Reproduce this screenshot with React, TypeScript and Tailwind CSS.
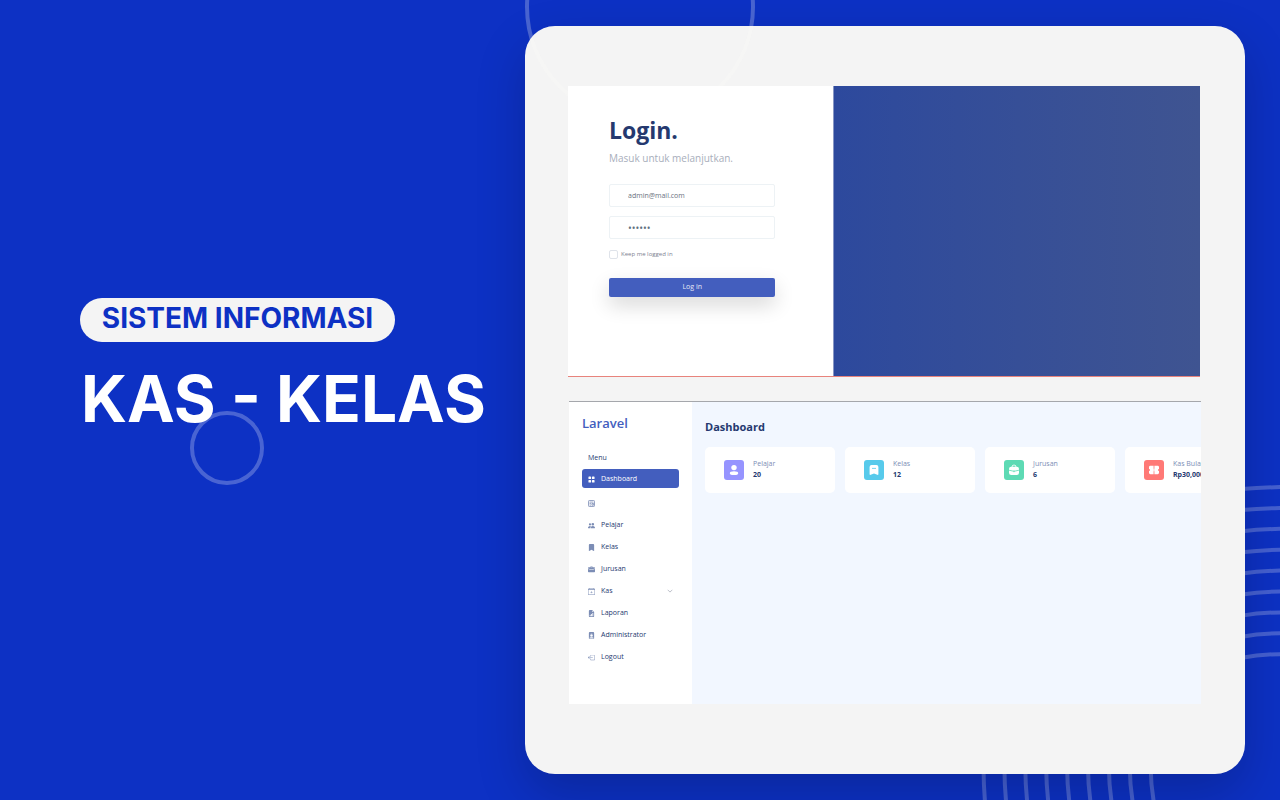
import type { ReactNode } from "react";
import {
  BsBookmarkFill,
  BsBriefcaseFill,
  BsCalendarPlus,
  BsChevronDown,
  BsFileEarmarkBarGraphFill,
  BsGridFill,
  BsPeopleFill,
  BsPersonBadgeFill,
  BsBoxArrowLeft,
} from "react-icons/bs";

const ringSteps = [0, 1, 2, 3, 4, 5, 6, 7, 8];

function Rings() {
  return (
    <svg
      aria-hidden="true"
      className="pointer-events-none absolute right-0 bottom-0 h-80 w-[300px]"
      viewBox="0 0 300 320"
      fill="none"
      stroke="#ffffff"
      strokeOpacity="0.23"
      strokeWidth="4"
    >
      {ringSteps.map((i) => (
        <g key={i}>
          <path d={`M262 ${9 + i * 21 + i * 0.1} Q280 ${7.6 + i * 20.9 - i * 0.1} 302 ${7 + i * 20.9}`} />
          <path d={`M${3.5 + i * 20.9} 288 Q${3.6 + i * 20.9} 304 ${5 + i * 21.1} 322`} />
        </g>
      ))}
    </svg>
  );
}

function ProfileIcon() {
  return (
    <svg viewBox="0 0 12 12" className="size-3" fill="#ffffff" aria-hidden="true">
      <circle cx="6" cy="3.6" r="2.7" />
      <ellipse cx="6" cy="9.2" rx="4.2" ry="1.9" />
    </svg>
  );
}

function BookmarkIcon() {
  return (
    <svg viewBox="0 0 12 12" className="size-3" aria-hidden="true">
      <path d="M3.600 1h4.800a2 2 0 0 1 2 2v7.200c0 .6-.6.9-1.100.6L6 9.500 2.700 10.800C2.200 11.100 1.600 10.800 1.600 10.200V3a2 2 0 0 1 2-2Z" fill="#ffffff" />
      <path d="M4 4.400h4" stroke="#57caeb" strokeWidth="0.8" />
    </svg>
  );
}

function WorkIcon() {
  return (
    <svg viewBox="0 0 12 12" className="size-3" aria-hidden="true">
      <path d="M4.200 3V2.400a1.200 1.200 0 0 1 1.200-1.200h1.200a1.200 1.200 0 0 1 1.200 1.200V3" fill="none" stroke="#ffffff" strokeWidth="1" />
      <rect x="1" y="2.800" width="10" height="8.200" rx="2.200" fill="#ffffff" />
      <path d="M1 6.200Q6 8.400 11 6.200M6 6.400v1.800" fill="none" stroke="#5ddab4" strokeWidth="0.8" />
    </svg>
  );
}

function TicketIcon() {
  return (
    <svg viewBox="0 0 12 12" className="size-3" fill="#ffffff" aria-hidden="true">
      <path d="M2.400 1.800h3.200v8.400H2.400A1.400 1.400 0 0 1 1 8.800V7a1 1 0 0 0 0-2V3.200a1.400 1.400 0 0 1 1.400-1.400Z" />
      <path d="M6.400 1.800h3.200A1.400 1.400 0 0 1 11 3.200V5a1 1 0 0 0 0 2v1.800a1.400 1.400 0 0 1-1.400 1.400H6.400Z" />
      <path d="M5.400 4.800h1.200v2.400H5.400z" />
    </svg>
  );
}

function RecordIcon() {
  return (
    <svg viewBox="0 0 14 14" className="size-[7px]" fill="none" stroke="currentColor" strokeWidth="1.600" aria-hidden="true">
      <rect x="1" y="1" width="12" height="12" rx="1.500" />
      <path d="M3 4.200h8M3 7.200h3.500M3 10.200h3.500M8 7h3.200v3.400H8z" />
    </svg>
  );
}

function LoginScreen() {
  return (
    <section className="flex h-[291px] w-full border-b border-[#e8837c] bg-white">
      <form className="w-[42%] shrink-0 pt-[30px] pr-[58px] pl-[41px]" onSubmit={(e) => e.preventDefault()}>
        <h2 className="text-[23px] leading-7 font-bold text-[#25396f]">Login.</h2>
        <p className="mt-2 text-[10px] leading-3 font-medium whitespace-nowrap text-[#a8aebb]">Masuk untuk melanjutkan.</p>
        <input
          type="email"
          aria-label="Email"
          defaultValue="admin@mail.com"
          className="mt-5 block h-[23px] w-full rounded-[2px] border border-[#edf2f5] pl-[18px] text-[7px] text-[#6b7280] outline-none"
        />
        <input
          type="password"
          aria-label="Password"
          defaultValue="secret"
          className="mt-[9px] block h-[23px] w-full rounded-[2px] border border-[#edf2f5] pl-[18px] text-[10px] text-[#607080] outline-none"
        />
        <label className="mt-2.5 flex h-[10px] items-center gap-[3px] text-[6px] font-medium text-[#7c8190]">
          <input type="checkbox" className="m-0 size-[9px] appearance-none rounded-[2px] border border-[#dfe3ea] bg-white" />
          Keep me logged in
        </label>
        <button
          type="submit"
          className="mt-[19px] block h-[19px] w-full rounded-[2px] bg-[#435ebe] text-[7px] text-[#e4e8f6] shadow-[0_8px_20px_rgba(0,0,0,0.16)]"
        >
          Log in
        </button>
      </form>
      <div className="flex-1 border-l border-[#8796c4] bg-linear-to-r from-[#2d499d] to-[#3f5491]" />
    </section>
  );
}

type MenuEntry = { label: string; icon: ReactNode };

const menu: MenuEntry[] = [
  { label: "Dashboard", icon: <BsGridFill /> },
  { label: "", icon: <RecordIcon /> },
  { label: "Pelajar", icon: <BsPeopleFill /> },
  { label: "Kelas", icon: <BsBookmarkFill /> },
  { label: "Jurusan", icon: <BsBriefcaseFill /> },
  { label: "Kas", icon: <BsCalendarPlus /> },
  { label: "Laporan", icon: <BsFileEarmarkBarGraphFill /> },
  { label: "Administrator", icon: <BsPersonBadgeFill /> },
  { label: "Logout", icon: <BsBoxArrowLeft /> },
];

function Sidebar() {
  return (
    <aside className="w-[123px] shrink-0 bg-white px-[13px] pt-[13px]">
      <h2 className="text-[13px] leading-4 font-semibold text-[#435ebe]">Laravel</h2>
      <p className="mt-[22px] pl-[6px] text-[7px] leading-[10px] font-medium text-[#25396f]">Menu</p>
      <nav className="mt-[6px] flex flex-col gap-[3px]">
        {menu.map((item, i) => (
          <a
            key={i}
            href="#"
            aria-label={item.label || "Item"}
            className={
              i === 0
                ? "mb-[2px] flex h-[19px] w-[97px] items-center gap-[6px] rounded-[3px] bg-[#435ebe] px-[6px] pt-px text-[7px] font-medium text-white"
                : "flex h-[19px] w-[97px] items-center gap-[6px] px-[6px] pt-px text-[7px] font-medium text-[#25396f]"
            }
          >
            <span className={i === 0 ? "mt-px text-white" : "mt-px text-[#7c8db5]"}>{item.icon}</span>
            <span>{item.label}</span>
            {item.label === "Kas" && <BsChevronDown className="ml-auto size-[6px] text-[#8d93a3]" />}
          </a>
        ))}
      </nav>
    </aside>
  );
}

const stats = [
  { label: "Pelajar", value: "20", tile: "bg-[#9694ff]", icon: <ProfileIcon /> },
  { label: "Kelas", value: "12", tile: "bg-[#57caeb]", icon: <BookmarkIcon /> },
  { label: "Jurusan", value: "6", tile: "bg-[#5ddab4]", icon: <WorkIcon /> },
  { label: "Kas Bulan", value: "Rp30,000", tile: "bg-[#ff7976]", icon: <TicketIcon /> },
];

function DashboardScreen() {
  return (
    <section className="ml-px -mr-px flex h-[303px] overflow-hidden border-t border-[#a5a7ac] bg-[#f2f7ff]">
      <Sidebar />
      <div className="min-w-0 flex-1 pt-[17px] pl-[13px]">
        <h3 className="text-[11px] leading-4 font-bold text-[#25396f]">Dashboard</h3>
        <div className="mt-[12px] flex gap-[10px]">
          {stats.map((s) => (
            <article key={s.label} className="flex h-[46px] w-[130px] shrink-0 items-center gap-[9px] rounded-[5px] bg-white pl-[19px]">
              <span className={`flex size-5 items-center justify-center rounded-[3px] ${s.tile}`}>{s.icon}</span>
              <div className="pb-[2px] text-[7px] leading-[11px] whitespace-nowrap">
                <p className="text-[#7c8db5]">{s.label}</p>
                <p className="font-bold text-[#25396f]">{s.value}</p>
              </div>
            </article>
          ))}
        </div>
      </div>
    </section>
  );
}

export default function App() {
  return (
    <div className="relative flex min-h-screen items-center overflow-hidden bg-[#0d31c4] pr-[35px] font-['Open_Sans',sans-serif]">
      <Rings />
      <header className="relative w-[525px] shrink-0 pb-[70px] pl-20 font-['Inter',sans-serif] font-bold">
        <p className="flex h-11 w-[315px] items-center justify-center rounded-full bg-[#f4f4f4] pb-1 text-[28px] whitespace-nowrap text-[#0d31c4]">
          SISTEM INFORMASI
        </p>
        <h1 className="mt-6 pl-px text-[64px] leading-[66px] whitespace-nowrap text-white">KAS - KELAS</h1>
        <div className="absolute top-[113px] left-[190px] size-[74px] rounded-full border-4 border-white/25" />
      </header>
      <main className="relative min-w-0 flex-1 rounded-[30px] bg-[#f4f4f4] pt-[60px] pr-[45px] pb-[70px] pl-[43px] shadow-[0_20px_50px_rgba(0,0,0,0.2)]">
        <div className="absolute -top-[134px] left-0 size-[230px] rounded-full border-4 border-[#fcfaf7]/25" />
        <div className="relative flex flex-col gap-6">
          <LoginScreen />
          <DashboardScreen />
        </div>
      </main>
    </div>
  );
}
